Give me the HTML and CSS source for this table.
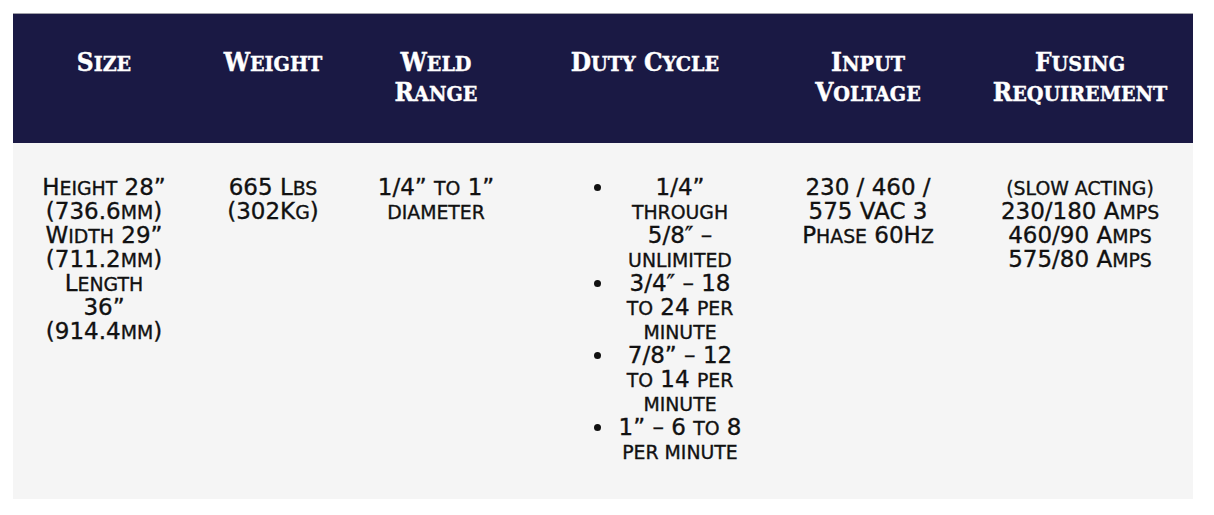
FILE: index.html
```html
<!DOCTYPE html>
<html lang="en">
<head>
<meta charset="utf-8">
<title>Specifications</title>
<link rel="stylesheet" href="styles.css">
</head>
<body>
<table class="spec">
  <colgroup>
    <col class="c-size">
    <col class="c-weight">
    <col class="c-range">
    <col class="c-duty">
    <col class="c-volt">
    <col class="c-fuse">
  </colgroup>
  <thead>
    <tr>
      <th>S<span class="sc">ize</span></th>
      <th>W<span class="sc">eight</span></th>
      <th>W<span class="sc">eld</span><br>R<span class="sc">ange</span></th>
      <th>D<span class="sc">uty</span> C<span class="sc">ycle</span></th>
      <th>I<span class="sc">nput</span><br>V<span class="sc">oltage</span></th>
      <th>F<span class="sc">using</span><br>R<span class="sc">equirement</span></th>
    </tr>
  </thead>
  <tbody>
    <tr>
      <td>H<span class="sc">eight</span> 28”<br>(736.6<span class="sc">mm</span>)<br>W<span class="sc">idth</span> 29”<br>(711.2<span class="sc">mm</span>)<br>L<span class="sc">ength</span><br>36”<br>(914.4<span class="sc">mm</span>)</td>
      <td>665 L<span class="sc">bs</span><br>(302K<span class="sc">g</span>)</td>
      <td>1/4” <span class="sc">to</span> 1”<br><span class="sc">diameter</span></td>
      <td>
        <ul class="duty">
          <li>1/4”<br><span class="sc">through</span><br>5/8″ –<br><span class="sc">unlimited</span></li>
          <li>3/4″ – 18<br><span class="sc">to</span> 24 <span class="sc">per</span><br><span class="sc">minute</span></li>
          <li>7/8” – 12<br><span class="sc">to</span> 14 <span class="sc">per</span><br><span class="sc">minute</span></li>
          <li>1” – 6 <span class="sc">to</span> 8<br><span class="sc">per minute</span></li>
        </ul>
      </td>
      <td>230 / 460 /<br>575 VAC 3<br>P<span class="sc">hase</span> 60H<span class="sc">z</span></td>
      <td><span class="sc">(slow acting)</span><br>230/180 A<span class="sc">mps</span><br>460/90 A<span class="sc">mps</span><br>575/80 A<span class="sc">mps</span></td>
    </tr>
  </tbody>
</table>
</body>
</html>
```
FILE: styles.css
```css
html, body {
  background: #ffffff;
}
body {
  margin: 0;
  padding: 13px 21px 16px 13px;
}
.spec {
  width: 1180px;
  border-collapse: collapse;
  table-layout: fixed;
}
.c-size { width: 182px; }
.c-weight { width: 156px; }
.c-range { width: 170px; }
.c-duty { width: 248px; }
.c-volt { width: 198px; }
.c-fuse { width: 226px; }

.spec th {
  background: #1a1944;
  color: #ffffff;
  border-top: 1px solid #a0a0a8;
  padding: 33px 4px 36px;
  vertical-align: top;
  text-align: center;
  font-family: "DejaVu Serif Condensed", "DejaVu Serif", serif;
  font-stretch: condensed;
  font-weight: bold;
  font-size: 26px;
  line-height: 30px;
  -webkit-text-stroke: 0.4px #ffffff;
}
.spec th .sc {
  font-size: 0.82em;
}
.spec td {
  background: #f5f5f5;
  color: #111111;
  padding: 32px 8px 36px;
  vertical-align: top;
  text-align: center;
  font-family: "DejaVu Sans", sans-serif;
  font-size: 23px;
  line-height: 24px;
  -webkit-text-stroke: 0.35px #111111;
}
.sc {
  text-transform: uppercase;
  font-size: 0.82em;
  line-height: 1;
}
.duty {
  margin: 0;
  padding: 0 16px 0 86px;
  list-style: disc outside;
}
.duty li {
  text-align: center;
}
```
